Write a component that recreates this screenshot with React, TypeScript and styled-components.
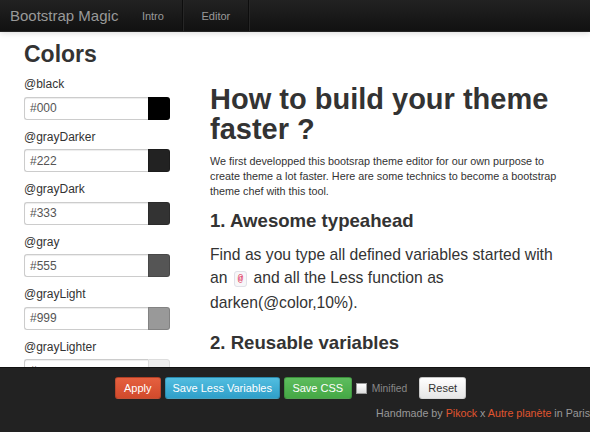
import React from 'react';
import styled, { createGlobalStyle } from 'styled-components';

const Global = createGlobalStyle`
  html, body { margin: 0; padding: 0; }
  body {
    font-family: "Liberation Sans", Arial, sans-serif;
    color: #333;
    background: #fff;
  }
`;

const Page = styled.div`
  width: 590px;
  height: 432px;
  display: flex;
  flex-direction: column;
  overflow: hidden;
`;

const Navbar = styled.div`
  height: 31px;
  flex: none;
  display: flex;
  align-items: stretch;
  background: linear-gradient(#222, #111);
  border-bottom: 1px solid #252525;
  box-shadow: 0 1px 6px rgba(0, 0, 0, 0.15);
  position: relative;
  z-index: 1;
`;

const Brand = styled.div`
  font-size: 15px;
  color: #999;
  padding: 0 5px 0 10px;
  display: flex;
  align-items: center;
`;

const NavLink = styled.div<{ w: number }>`
  font-size: 11px;
  color: #999;
  display: flex;
  align-items: center;
  justify-content: center;
  width: ${(p) => p.w}px;
  border-right: 1px solid #0d0d0d;
  box-shadow: 1px 0 0 #262626;
`;

const Main = styled.div`
  flex: 1;
  display: flex;
  overflow: hidden;
  padding-left: 24px;
`;

const Sidebar = styled.div`
  width: 146px;
  flex: none;
`;

const SideTitle = styled.h2`
  margin: 9px 0 10px;
  font-size: 23px;
  line-height: 26px;
  font-weight: bold;
  color: #333;
`;

const Field = styled.div`
  margin-bottom: 10px;
`;

const Label = styled.div`
  font-size: 12px;
  line-height: 15.5px;
  color: #333;
  margin-bottom: 4px;
`;

const InputRow = styled.div`
  display: flex;
  height: 23px;
`;

const TextInput = styled.div`
  flex: 1;
  box-sizing: border-box;
  border: 1px solid #ccc;
  border-right: none;
  border-radius: 3px 0 0 3px;
  box-shadow: inset 0 1px 1px rgba(0, 0, 0, 0.075);
  font-size: 12px;
  color: #555;
  padding-left: 5px;
  display: flex;
  align-items: center;
`;

const Swatch = styled.div<{ c: string }>`
  width: 22px;
  box-sizing: border-box;
  background: ${(p) => p.c};
  border: 1px solid ${(p) => (p.c === '#eee' ? '#ddd' : 'rgba(0,0,0,0.15)')};
  border-radius: 0 3px 3px 0;
`;

const Content = styled.div`
  margin-left: 40px;
  width: 360px;
  padding-top: 52px;
`;

const Title = styled.h1`
  margin: 0 0 10px;
  font-size: 29px;
  line-height: 30px;
  font-weight: bold;
  color: #333;
`;

const Lead = styled.p`
  margin: 0 0 10px;
  font-size: 10.8px;
  line-height: 15px;
  color: #333;
`;

const Sub = styled.h3<{ gap: number }>`
  margin: 0 0 ${(p) => p.gap}px;
  font-size: 18.6px;
  line-height: 24px;
  font-weight: bold;
  color: #333;
`;

const Body = styled.p`
  margin: 0 0 16px;
  font-size: 15.7px;
  line-height: 23.2px;
  color: #333;
`;

const Code = styled.code`
  font-family: "Liberation Mono", monospace;
  font-size: 9px;
  color: #d14;
  background: #f7f7f9;
  border: 1px solid #e1e1e8;
  border-radius: 3px;
  padding: 2px 3px;
  margin: 0 2px;
  vertical-align: 2px;
`;

const Footer = styled.div`
  height: 65px;
  flex: none;
  background: #222;
  border-top: 1px solid #111;
  box-sizing: border-box;
  display: flex;
  flex-direction: column;
  padding-top: 9px;
`;

const Actions = styled.div`
  display: flex;
  justify-content: center;
  align-items: center;
  gap: 4px;
  padding-right: 9px;
`;

const tones: Record<string, [string, string, string]> = {
  danger: ['#e5603f', '#d14a2c', '#fff'],
  info: ['#52bde0', '#2f9fc9', '#fff'],
  success: ['#5ebd5e', '#45a845', '#fff'],
  plain: ['#ffffff', '#e6e6e6', '#333'],
};

const Btn = styled.div<{ tone: string; w: number }>`
  width: ${(p) => p.w}px;
  height: 22px;
  box-sizing: border-box;
  border-radius: 3px;
  border: 1px solid rgba(0, 0, 0, 0.15);
  background: linear-gradient(${(p) => tones[p.tone][0]}, ${(p) => tones[p.tone][1]});
  color: ${(p) => tones[p.tone][2]};
  font-size: 11px;
  display: flex;
  align-items: center;
  justify-content: center;
`;

const Check = styled.span`
  width: 9px;
  height: 9px;
  background: linear-gradient(#fff, #ddd);
  border: 1px solid #999;
`;

const CheckLabel = styled.span`
  font-size: 10.3px;
  color: #888;
  margin: 0 8px 0 1px;
`;

const Credit = styled.div`
  margin-top: 8px;
  text-align: right;
  font-size: 10.7px;
  color: #999;
  white-space: nowrap;
`;

const Link = styled.span`
  color: #e0552f;
`;

const colors: [string, string, string][] = [
  ['@black', '#000', '#000'],
  ['@grayDarker', '#222', '#222'],
  ['@grayDark', '#333', '#333'],
  ['@gray', '#555', '#555'],
  ['@grayLight', '#999', '#999'],
  ['@grayLighter', '#eee', '#eee'],
];

export default function App() {
  return (
    <Page>
      <Global />
      <Navbar>
        <Brand>Bootstrap Magic</Brand>
        <NavLink w={59}>Intro</NavLink>
        <NavLink w={65}>Editor</NavLink>
      </Navbar>
      <Main>
        <Sidebar>
          <SideTitle>Colors</SideTitle>
          {colors.map(([name, val, c]) => (
            <Field key={name}>
              <Label>{name}</Label>
              <InputRow>
                <TextInput>{val}</TextInput>
                <Swatch c={c} />
              </InputRow>
            </Field>
          ))}
        </Sidebar>
        <Content>
          <Title>How to build your theme faster ?</Title>
          <Lead>
            We first developped this bootsrap theme editor for our own purpose to create theme a lot
            faster. Here are some technics to become a bootstrap theme chef with this tool.
          </Lead>
          <Sub gap={10}>1. Awesome typeahead</Sub>
          <Body>
            Find as you type all defined variables started with an <Code>@</Code> and all the Less
            function as darken(@color,10%).
          </Body>
          <Sub gap={0}>2. Reusable variables</Sub>
        </Content>
      </Main>
      <Footer>
        <Actions>
          <Btn tone="danger" w={46}>Apply</Btn>
          <Btn tone="info" w={115}>Save Less Variables</Btn>
          <Btn tone="success" w={68}>Save CSS</Btn>
          <Check />
          <CheckLabel>Minified</CheckLabel>
          <Btn tone="plain" w={47}>Reset</Btn>
        </Actions>
        <Credit>
          Handmade by <Link>Pikock</Link> x <Link>Autre planète</Link> in Paris
        </Credit>
      </Footer>
    </Page>
  );
}
